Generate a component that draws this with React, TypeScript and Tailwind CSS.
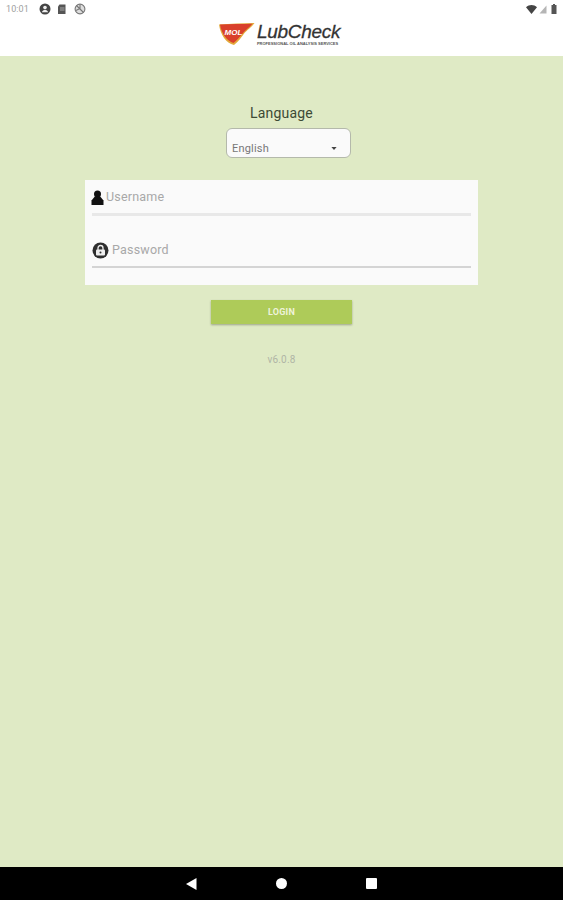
import * as React from 'react';

function StatusBar() {
  return (
    <div className="flex h-[18px] items-center justify-between pl-[6px] pr-[6px]">
      <div className="flex items-center">
        <span className="w-[33px] text-[9px] leading-none tracking-[0.1px] text-[#a0a0a0]">10:01</span>
        <svg width="12" height="12" viewBox="0 0 12 12" className="mr-[5px]">
          <circle cx="6" cy="6" r="5.5" fill="#444" />
          <circle cx="6" cy="4.6" r="1.8" fill="#eee" />
          <path d="M2.8 9.2c.6-1.7 1.8-2.3 3.2-2.3s2.6.6 3.2 2.3z" fill="#eee" />
        </svg>
        <svg width="12" height="12" viewBox="0 0 12 12" className="mr-[6px]">
          <path d="M3.5 1.5h6v9.5h-7.5V3.5z" fill="#555" />
          <path d="M4 5h4.500M4 7h4.500" stroke="#ccc" strokeWidth="0.7" />
        </svg>
        <svg width="12" height="12" viewBox="0 0 12 12">
          <circle cx="6" cy="6" r="4.900" fill="#ddd" stroke="#777" strokeWidth="1.100" />
          <path d="M2.500 2.500l7 7M6 1.500v4L2 7.500" stroke="#777" strokeWidth="1.100" fill="none" />
        </svg>
      </div>
      <div className="flex items-center gap-[2px]">
        <svg width="11" height="9" viewBox="0 0 11 9">
          <path d="M0 2.200C3.200-.6 7.800-.6 11 2.200L5.500 9z" fill="#444" />
        </svg>
        <svg width="8" height="9" viewBox="0 0 8 9">
          <path d="M7.500 .5v8h-7z" fill="#b5b5b5" />
        </svg>
        <svg width="6" height="10" viewBox="0 0 6 10" className="ml-[2px]">
          <path d="M2 0h2v1h1.500v9h-5v-9h1.500z" fill="#555" />
        </svg>
      </div>
    </div>
  );
}

function Logo() {
  return (
    <div className="flex h-[38px] items-start justify-center pr-[4px]">
      <svg width="36" height="23" viewBox="0 0 36 23" className="mt-[5px]">
        <path d="M0 1.500C12 .5 24 .5 35.500 0 32 5 28 7 25.500 10 22 15 19 19 15 22 7 20 1.500 12 0 1.500z" fill="#e3a93a" />
        <path d="M1 1.500C12 1 23 1 33.500 .8 30 5 27 6.500 24.500 9.500 21 14 18 17 14.500 20 8 18 2.500 11 1 1.500z" fill="#d9402b" />
        <text x="5.500" y="11.500" fontSize="8" fontWeight="700" fontStyle="italic" fill="#fff" className="font-['Liberation_Sans',sans-serif]">MOL</text>
      </svg>
      <div className="ml-[2px] flex flex-col items-start">
        <span className="mt-[3px] font-['Liberation_Sans',sans-serif] text-[19px] leading-[21px] tracking-[-0.3px] text-[#333] italic [-webkit-text-stroke:0.3px_#333]">LubCheck</span>
        <span className="mt-[-1px] font-['Liberation_Sans',sans-serif] text-[4px] leading-[5px] font-bold whitespace-nowrap text-[#555]">PROFESSIONAL OIL ANALYSIS SERVICES</span>
      </div>
    </div>
  );
}

function Field({ icon, label, line }: { icon: React.ReactNode; label: string; line: string }) {
  return (
    <div className="h-[53px]">
      <div className="flex h-[32px] items-center">
        {icon}
        <span className="text-[12.500px] tracking-[0.2px] text-[#a8a8a8]">{label}</span>
      </div>
      <div className={line} />
    </div>
  );
}

export default function App() {
  return (
    <div className="flex h-[900px] w-full flex-col bg-[#dfeac5] font-['Roboto',sans-serif]">
      <header className="h-[56px] bg-white">
        <StatusBar />
        <Logo />
      </header>
      <main className="flex flex-1 flex-col items-center pt-[47px]">
        <div className="text-[14px] leading-[20px] tracking-[0.2px] text-[#3d4a35]">Language</div>
        <div className="mt-[5px] ml-[14px] flex h-[30px] w-[125px] items-end justify-between rounded-[6px] border border-[#b4b9ab] bg-[#fafafa] pr-[13px] pl-[5px]">
          <span className="text-[11px] leading-[16px] tracking-[0.2px] text-[#777]">English</span>
          <svg width="6" height="3" viewBox="0 0 7 4" className="mb-[7px]">
            <path d="M0 0h7L3.500 4z" fill="#444" />
          </svg>
        </div>
        <div className="mt-[22px] h-[105px] w-[393px] bg-[#fafafa] px-[7px] pt-[1px]">
          <Field
            label="Username"
            line="h-[3px] bg-[#e8e8e8]"
            icon={
              <svg width="13" height="15" viewBox="0 0 13 15" className="mr-[2px] ml-[-1px]">
                <circle cx="6.500" cy="4" r="3.500" fill="#111" />
                <path d="M3.800 6.500L0.500 10.500V15h12v-4.500L9.200 6.500z" fill="#111" />
              </svg>
            }
          />
          <Field
            label="Password"
            line="h-[2px] bg-[#d4d4d4]"
            icon={
              <svg width="17" height="17" viewBox="0 0 17 17" className="mr-[3px] mt-[1px]">
                <circle cx="8.500" cy="8.500" r="8" fill="#2e2e2e" />
                <path d="M6 8V6a2.500 2.500 0 0 1 5 0v2" stroke="#eee" strokeWidth="1.300" fill="none" />
                <rect x="4" y="7.500" width="9" height="6" rx="1" fill="#eee" />
                <circle cx="8.500" cy="10.500" r="1" fill="#2e2e2e" />
              </svg>
            }
          />
        </div>
        <button className="mt-[15px] h-[24px] w-[141px] bg-[#aecb59] pt-[2px] text-[9px] font-bold tracking-[0.2px] text-[#eef3dc] shadow-[0_1px_2px_rgba(0,0,0,0.3)]">
          LOGIN
        </button>
        <div className="mt-[29px] text-[10px] leading-[14px] tracking-[0.2px] text-[#b0b5a6]">v6.0.8</div>
      </main>
      <nav className="flex h-[33px] items-center justify-center bg-black">
        <svg width="11" height="12" viewBox="0 0 11 12" className="mr-[79px]">
          <path d="M10.500 0v12L0 6z" fill="#fff" />
        </svg>
        <div className="mr-[79px] h-[11px] w-[11px] rounded-full bg-white" />
        <div className="h-[11px] w-[11px] rounded-[1px] bg-white" />
      </nav>
    </div>
  );
}
